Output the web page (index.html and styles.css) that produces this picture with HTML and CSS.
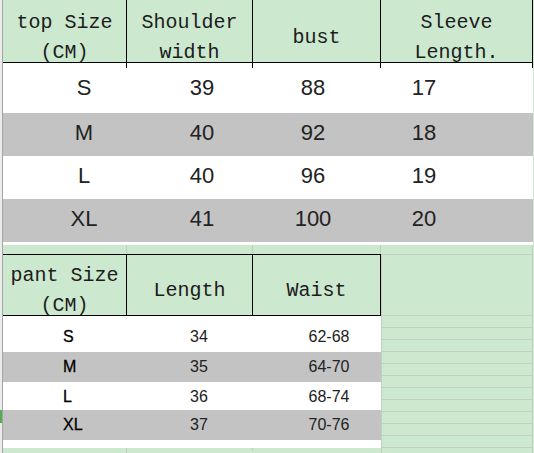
FILE: index.html
```html
<!DOCTYPE html>
<html>
<head>
<meta charset="utf-8">
<link rel="stylesheet" href="styles.css">
</head>
<body>
<div class="page">
  <div class="gutter"><div class="mark"></div></div>
  <div class="sheet">
    <section class="top">
      <div class="thead">
        <div class="th">top Size<br>(CM)</div>
        <div class="th">Shoulder<br>width</div>
        <div class="th">bust</div>
        <div class="th">Sleeve<br>Length.</div>
      </div>
      <div class="tbody">
        <div class="trow first"><span>S</span><span>39</span><span>88</span><span>17</span></div>
        <div class="trow grey"><span>M</span><span>40</span><span>92</span><span>18</span></div>
        <div class="trow"><span>L</span><span>40</span><span>96</span><span>19</span></div>
        <div class="trow grey"><span>XL</span><span>41</span><span>100</span><span>20</span></div>
        <div class="tpad"></div>
      </div>
    </section>
    <div class="gap"><i></i><i></i><i></i><i></i></div>
    <section class="bottom">
      <div class="left">
        <div class="phead">
          <div class="th">pant Size<br>(CM)</div>
          <div class="th">Length</div>
          <div class="th">Waist</div>
        </div>
        <div class="pbody">
          <div class="prow p-s"><span>S</span><span>34</span><span></span><span>62-68</span></div>
          <div class="prow p-m grey"><span>M</span><span>35</span><span></span><span>64-70</span></div>
          <div class="prow p-l"><span>L</span><span>36</span><span></span><span>68-74</span></div>
          <div class="prow p-xl grey"><span>XL</span><span>37</span><span></span><span>70-76</span></div>
          <div class="ppad"></div>
        </div>
        <div class="tail"><i></i><i></i><i></i></div>
      </div>
      <div class="fill">
        <div class="fill-head"></div>
        <div class="fill-rows"></div>
      </div>
    </section>
  </div>
</div>
</body>
</html>
```

FILE: styles.css
```css
* { box-sizing: border-box; }
html, body {
  margin: 0;
  padding: 0;
  width: 534px;
  height: 453px;
  overflow: hidden;
  background: #cce8cf;
}
.page {
  display: flex;
  width: 534px;
  height: 453px;
}
.gutter {
  width: 3px;
  flex: none;
  background: #ececec;
  border-right: 1px solid #a4a4a4;
}
.mark {
  margin-top: 410px;
  height: 13px;
  background: #52ad52;
}
.sheet {
  flex: 1;
  display: flex;
  flex-direction: column;
}
.th {
  display: flex;
  align-items: center;
  justify-content: center;
  text-align: center;
  font-family: "Liberation Mono", "DejaVu Sans Mono", monospace;
  font-size: 20px;
  line-height: 30px;
  color: #1c1c1c;
  border-right: 1px solid #000;
}
.thead {
  display: grid;
  grid-template-columns: 124px 126px 128px 152px;
  height: 63px;
  background: #cce8cf;
  border-bottom: 1px solid #000;
  width: 530px;
}
.thead .th { padding-top: 8px; }
.tbody {
  width: 530px;
  background: #fff;
}
.trow {
  display: grid;
  grid-template-columns: 162px 74px 148px 74px 1fr;
  align-items: center;
  height: 43px;
  padding-bottom: 3px;
  font-family: "Liberation Sans", Arial, sans-serif;
  font-size: 22px;
  color: #222;
  background: #fff;
}
.trow span { text-align: center; }
.trow.first { height: 50px; padding-bottom: 0; }
.grey { background: #c3c3c3 !important; }
.tpad { height: 3px; background: #fff; }
.gap {
  display: grid;
  grid-template-columns: 124px 126px 128px 152px;
  height: 9px;
  width: 530px;
}
.gap i, .tail i {
  border-right: 1px solid #c2cdc3;
}
.bottom {
  flex: 1;
  display: flex;
}
.left {
  width: 378px;
  flex: none;
  display: flex;
  flex-direction: column;
}
.phead {
  display: grid;
  grid-template-columns: 124px 126px 128px;
  height: 62px;
  border-top: 1px solid #000;
  border-bottom: 1px solid #000;
}
.phead .th { padding-top: 6px; }
.pbody { background: #fff; }
.prow {
  display: grid;
  grid-template-columns: 170px 52px 52px 104px;
  align-items: center;
  font-family: "Liberation Sans", Arial, sans-serif;
  font-size: 16px;
  color: #222;
  background: #fff;
}
.prow span { text-align: center; }
.prow span:first-child { text-align: left; padding-left: 60px; color: #000; -webkit-text-stroke: 0.3px #000; }
.p-s { height: 36px; padding-top: 6px; }
.p-m { height: 30px; }
.p-l { height: 28px; padding-top: 2px; }
.p-xl { height: 30px; }
.ppad { height: 8px; background: #fff; }
.tail {
  flex: 1;
  display: grid;
  grid-template-columns: 124px 126px;
}
.fill {
  flex: 1;
  display: flex;
  flex-direction: column;
  border-left: 1px solid #c2cdc3;
}
.fill-head {
  height: 61px;
  border-top: 1px solid #c2cdc3;
  width: 151px;
  border-right: 1px solid #c2cdc3;
}
.fill-rows {
  flex: 1;
  width: 151px;
  border-right: 1px solid #c2cdc3;
  background: repeating-linear-gradient(to bottom, #c2cdc3 0 1px, transparent 1px 12px);
}
```
